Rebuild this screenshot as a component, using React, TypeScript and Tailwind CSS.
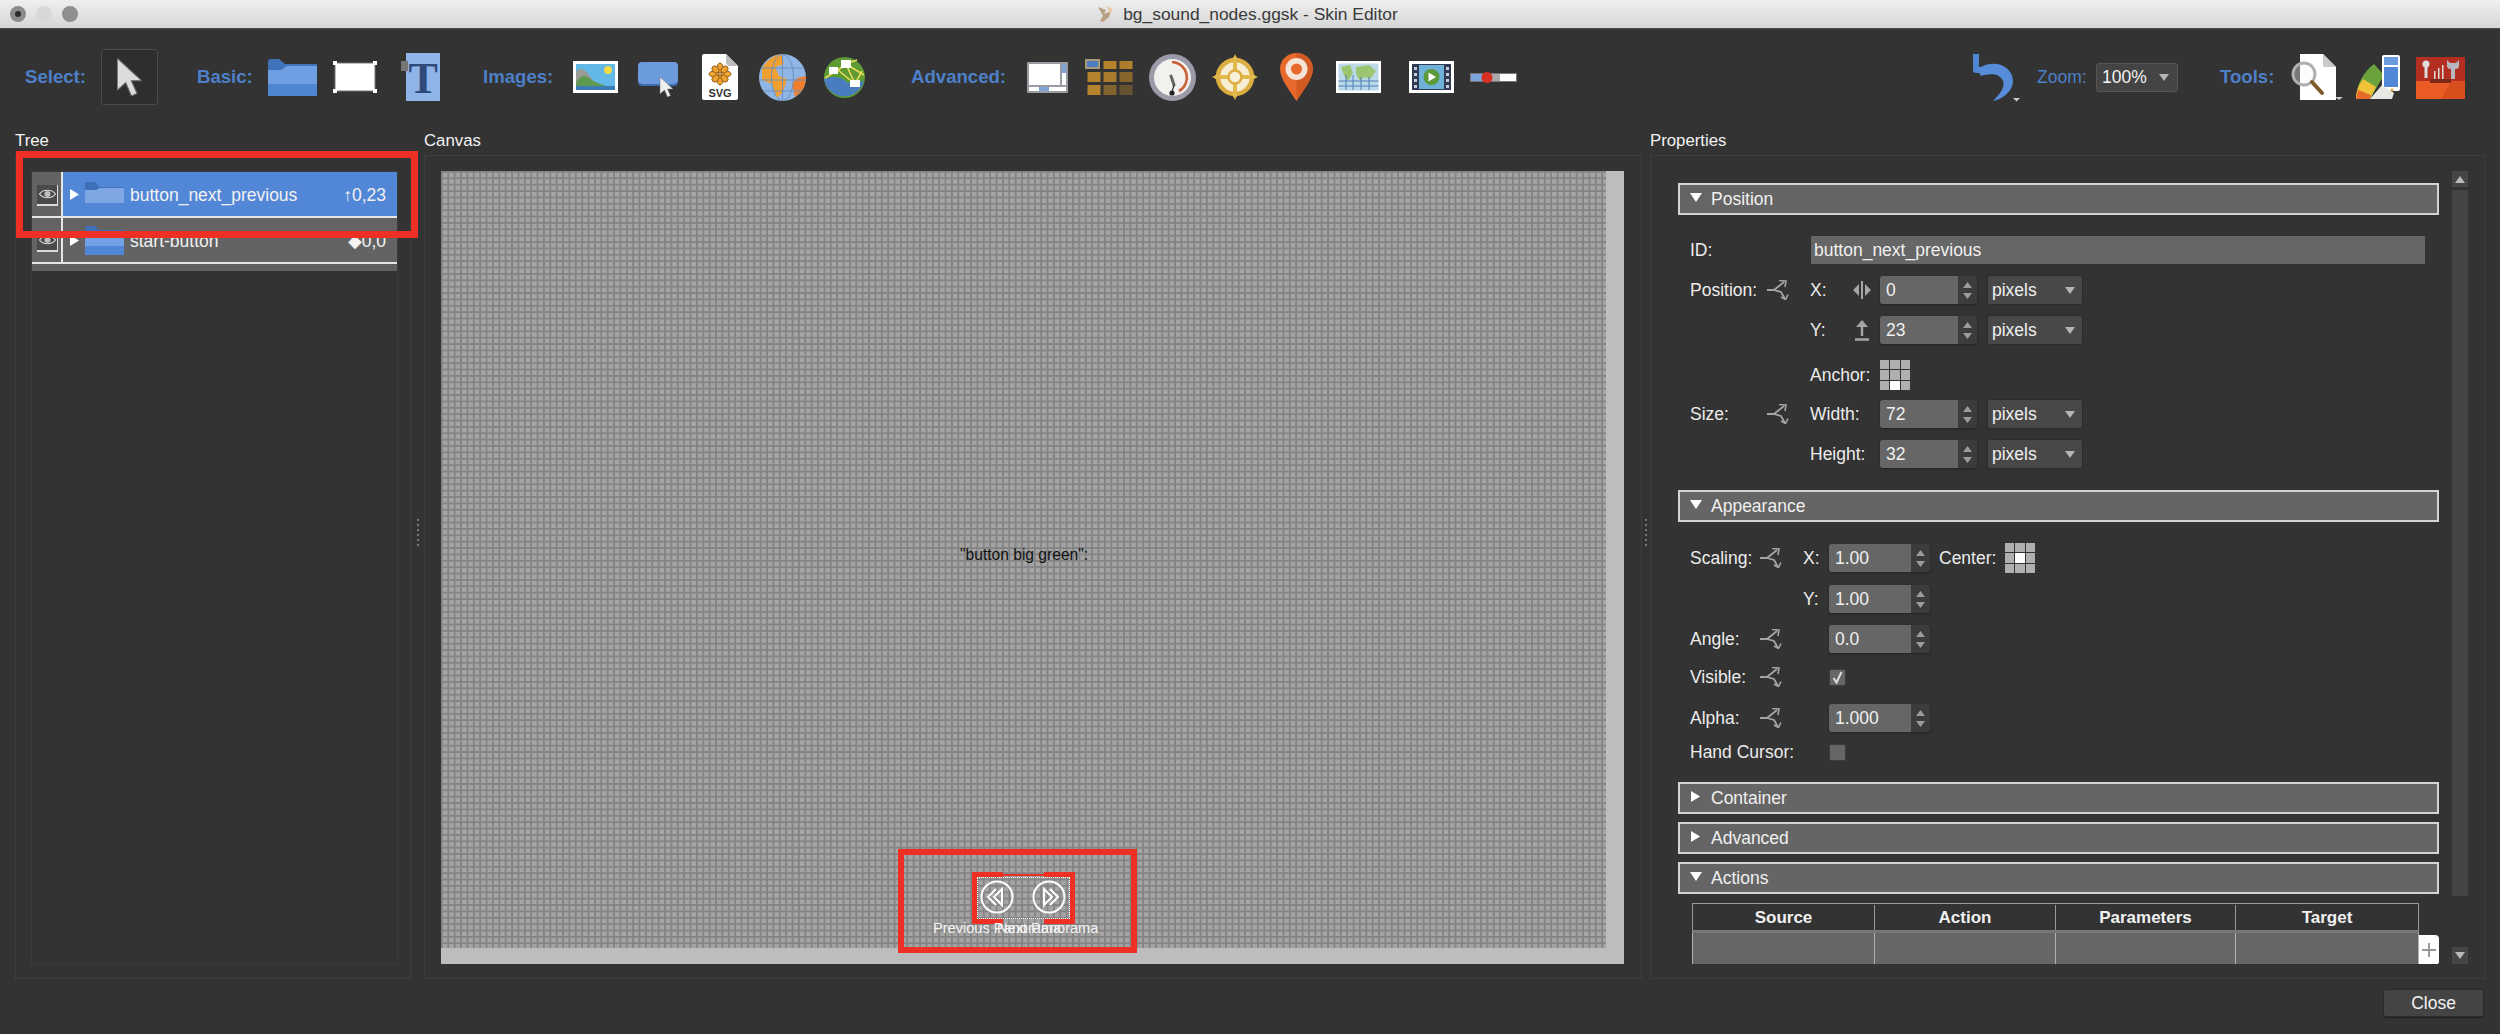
import type { ReactNode } from "react";

const Triangle = ({ dir, className = "" }: { dir: "up" | "down" | "right"; className?: string }) => {
  const d = dir === "up" ? "M0 8 L5 0 L10 8 Z" : dir === "down" ? "M0 0 L10 0 L5 8 Z" : "M0 0 L8 5 L0 10 Z";
  const w = dir === "right" ? 8 : 10;
  const h = dir === "right" ? 10 : 8;
  return (
    <svg viewBox={`0 0 ${w} ${h}`} preserveAspectRatio="none" className={`shrink-0 ${className}`}>
      <path d={d} fill="currentColor" />
    </svg>
  );
};

const CURSOR = "M0 0 L0 17 L4.5 13 L7.5 20 L10.5 18.7 L7.5 12 L13 12 Z";

const ToolLabel = ({ text, className }: { text: string; className: string }) => (
  <div className={`shrink-0 whitespace-nowrap text-[18.6px] leading-none font-bold text-[#4d80c8] ${className}`}>{text}</div>
);

const FolderIcon = () => (
  <svg width="49" height="37" viewBox="0 0 49 37" className="ml-[17px] shrink-0">
    <path d="M0 3 Q0 0 3 0 H11 L17 5 H49 V12 H0 Z" fill="#3f73bb" />
    <path d="M0 11 H13 L19 7 H49 V37 H0 Z" fill="#6f9fe2" />
    <rect y="25" width="49" height="12" fill="#4f86d2" />
  </svg>
);

const RectIcon = () => (
  <svg width="44" height="32" viewBox="0 0 44 32" className="ml-[16px] shrink-0">
    <rect x="2" y="2" width="40" height="28" fill="#fff" stroke="#777" />
    <rect width="4" height="4" fill="#fff" />
    <rect x="40" width="4" height="4" fill="#fff" />
    <rect y="28" width="4" height="4" fill="#fff" />
    <rect x="40" y="28" width="4" height="4" fill="#fff" />
  </svg>
);

const TextIcon = () => (
  <svg width="39" height="48" viewBox="0 0 39 48" className="ml-[24px] shrink-0">
    <rect x="5" width="34" height="48" fill="#8fb4e8" />
    <rect x="0" y="8" width="7" height="10" fill="#777" />
    <text x="7.5" y="40" fontSize="44" fontWeight="700" fontFamily="'Liberation Serif', serif" fill="#2f4a78">T</text>
  </svg>
);

const ImageIcon = () => (
  <svg width="45" height="32" viewBox="0 0 45 32" className="ml-[20px] shrink-0">
    <rect width="45" height="32" fill="#fff" />
    <rect x="3" y="3" width="39" height="26" fill="#62b8e6" />
    <circle cx="35" cy="9" r="4" fill="#f2dc45" />
    <path d="M3 10 C8 6 12 8 16 14 L24 25 H3 Z" fill="#9a9a98" />
    <path d="M3 22 C8 12 14 14 20 20 L33 25 H3 Z" fill="#5f9a52" />
    <rect x="3" y="25" width="39" height="4" fill="#3d7db5" />
  </svg>
);

const ButtonIcon = () => (
  <svg width="40" height="35" viewBox="0 0 40 35" className="mt-[5px] ml-[20px] shrink-0">
    <rect width="40" height="22" rx="4" fill="#6c9bdd" />
    <path d="M0 18 Q0 22 4 22 H36 Q40 22 40 18 V20 Q40 24 36 24 H4 Q0 24 0 20 Z" fill="#3f6db1" />
    <path d={CURSOR} transform="translate(22 15)" fill="#eee" stroke="#777" strokeWidth="0.5" />
  </svg>
);

const SvgIcon = () => (
  <svg width="36" height="46" viewBox="0 0 36 46" className="ml-[24px] shrink-0">
    <path d="M2 0 H24 L36 12 V44 Q36 46 34 46 H2 Q0 46 0 44 V2 Q0 0 2 0 Z" fill="#fff" />
    <path d="M24 0 L36 12 H28 Q24 12 24 8 Z" fill="#bdbdbd" />
    <g fill="#f0a32e" stroke="#7a4a10" strokeWidth="0.8">
      <ellipse cx="18" cy="14" rx="3" ry="5" />
      <ellipse cx="18" cy="26" rx="3" ry="5" />
      <ellipse cx="12" cy="20" rx="5" ry="3" />
      <ellipse cx="24" cy="20" rx="5" ry="3" />
      <ellipse cx="13.5" cy="15.5" rx="3" ry="4" transform="rotate(-45 13.5 15.5)" />
      <ellipse cx="22.5" cy="15.5" rx="3" ry="4" transform="rotate(45 22.5 15.5)" />
      <ellipse cx="13.5" cy="24.5" rx="3" ry="4" transform="rotate(45 13.5 24.5)" />
      <ellipse cx="22.5" cy="24.5" rx="3" ry="4" transform="rotate(-45 22.5 24.5)" />
    </g>
    <text x="18" y="43" textAnchor="middle" fontSize="11" fontWeight="700" fontFamily="'Liberation Sans', sans-serif" fill="#333">SVG</text>
  </svg>
);

const GlobeIcon = () => (
  <svg width="47" height="47" viewBox="0 0 47 47" className="ml-[21px] shrink-0">
    <circle cx="23.5" cy="23.5" r="23.5" fill="#8fb6e4" />
    <path d="M3 14 C10 4 18 0 23 1 L25 10 L16 13 L20 22 L28 25 L24 38 L18 44 L13 30 L3 26 Z" fill="#f2a030" />
    <path d="M47 22 A24 24 0 0 1 36 43 L33 30 L38 24 Z" fill="#f07f2e" />
    <g stroke="#6f90bc" strokeWidth="1" fill="none">
      <ellipse cx="23.5" cy="23.5" rx="11" ry="23" />
      <line x1="23.5" y1="0" x2="23.5" y2="47" />
      <line x1="2" y1="14" x2="45" y2="14" />
      <line x1="1" y1="26" x2="46" y2="26" />
      <line x1="5" y1="37" x2="42" y2="37" />
    </g>
  </svg>
);

const NetworkIcon = () => (
  <svg width="41" height="41" viewBox="0 0 41 41" className="ml-[18px] shrink-0">
    <circle cx="20.5" cy="20.5" r="20.5" fill="#5d9a33" />
    <path d="M0 22 C10 18 18 20 24 26 L40 24 A20.5 20.5 0 0 1 1 26 Z" fill="#4a7dc0" />
    <g stroke="#e8dc5a" strokeWidth="1.6" fill="none">
      <path d="M1 21 L14 13 L22 7 L33 3" />
      <path d="M22 7 L31 27 L38 14" />
      <path d="M14 13 L31 27" />
      <path d="M22 7 L40 18" />
    </g>
    <rect x="17" y="3" width="10" height="8" fill="#fff" />
    <rect x="5" y="10" width="9" height="7" fill="#fff" />
    <rect x="26" y="23" width="10" height="7" fill="#fff" />
  </svg>
);

const WindowIcon = () => (
  <svg width="41" height="31" viewBox="0 0 41 31" className="ml-[21px] shrink-0">
    <rect width="41" height="31" rx="1" fill="#9a9ca3" />
    <rect x="2" y="2" width="31" height="21" fill="#fff" />
    <rect x="35" y="2" width="4" height="21" fill="#fff" />
    <rect x="35" y="2" width="4" height="9" fill="#7fa4d8" />
    <rect x="2" y="25" width="37" height="4" fill="#fff" />
    <rect x="12" y="25" width="10" height="4" fill="#7fa4d8" />
  </svg>
);

const TILE_OPACITY = [0, 1, 0.95, 1, 0.9, 0.65, 1, 0.6, 0.4];

const GridIcon = () => (
  <svg width="48" height="36" viewBox="0 0 48 36" className="ml-[17px] shrink-0">
    {TILE_OPACITY.map((o, i) =>
      i === 0 ? (
        <g key={i}>
          <rect width="15" height="10" fill="#a89c7c" />
          <rect x="2" y="2" width="11" height="6" fill="#4d7cc0" />
        </g>
      ) : (
        <rect key={i} x={2.5 + (i % 3) * 16} y={Math.floor(i / 3) * 13 + (i < 3 ? 2 : 0)} width="13" height={i < 3 ? 8 : 10} fill="#b5832c" opacity={o} />
      )
    )}
  </svg>
);

const DialIcon = () => (
  <svg width="47" height="47" viewBox="0 0 47 47" className="ml-[16px] shrink-0">
    <circle cx="23.5" cy="23.5" r="23.5" fill="#9a9aa8" />
    <circle cx="23.5" cy="23.5" r="18.5" fill="#f3f1ee" />
    <path d="M23 8 A15.5 15.5 0 0 1 30 37" fill="none" stroke="#c8623a" strokeWidth="2.6" />
    <path d="M22 22 L25 31" stroke="#666" strokeWidth="3" strokeLinecap="round" />
    <path d="M25 31 L23 38" stroke="#333" strokeWidth="1.2" />
    <circle cx="23" cy="39" r="2.6" fill="#222" />
  </svg>
);

const CrosshairIcon = () => (
  <svg width="46" height="46" viewBox="0 0 46 46" className="ml-[16px] shrink-0">
    <circle cx="23" cy="23" r="17" fill="#f6edd2" stroke="#dcae40" strokeWidth="4.5" />
    <path d="M23 0 L26 6 H20 Z M23 46 L26 40 H20 Z M0 23 L6 20 V26 Z M46 23 L40 20 V26 Z" fill="#dcae40" />
    <path d="M23 3 V43 M3 23 H43" stroke="#e3b84c" strokeWidth="4" />
    <circle cx="23" cy="23" r="6.5" fill="#f7efd8" stroke="#dcae40" strokeWidth="2.5" />
  </svg>
);

const PinIcon = () => (
  <svg width="33" height="48" viewBox="0 0 33 48" className="ml-[22px] shrink-0">
    <path d="M16.5 0 C7 0 0 7 0 16 C0 26 10 38 16.5 48 C23 38 33 26 33 16 C33 7 26 0 16.5 0 Z" fill="#e8692c" />
    <path d="M16.5 0 C26 0 33 7 33 16 C33 26 23 38 16.5 48 Z" fill="#c9551f" opacity="0.7" />
    <circle cx="16.5" cy="16" r="11" fill="#f6e3d8" />
    <circle cx="16.5" cy="16" r="5.5" fill="#e8692c" />
  </svg>
);

const MapIcon = () => (
  <svg width="45" height="32" viewBox="0 0 45 32" className="ml-[23px] shrink-0">
    <rect width="45" height="32" fill="#fff" />
    <rect x="2.5" y="2.5" width="40" height="27" fill="#bcd9ea" />
    <path d="M5 6 L14 4 L17 12 L12 20 L8 14 Z M20 6 L33 4 L40 10 L34 18 L28 16 L24 20 L20 13 Z" fill="#9cc56f" />
    <path d="M2.5 20 H42.5 M2.5 25 H42.5 M10 14 V29 M17 14 V29 M25 16 V29 M33 16 V29" stroke="#4f7fb8" strokeWidth="1" />
  </svg>
);

const FilmIcon = () => (
  <svg width="45" height="32" viewBox="0 0 45 32" className="ml-[28px] shrink-0">
    <rect width="45" height="32" fill="#fff" />
    <rect x="3" y="3" width="39" height="26" fill="#2f3a55" />
    <rect x="10" y="4" width="25" height="24" fill="#6fb1d8" />
    <circle cx="22.5" cy="16" r="8" fill="#5d9a3a" />
    <path d="M19.5 11.5 L27 16 L19.5 20.5 Z" fill="#fff" />
    <g fill="#c8ccd8">
      <rect x="5" y="6" width="3" height="3" />
      <rect x="5" y="12" width="3" height="3" />
      <rect x="5" y="18" width="3" height="3" />
      <rect x="5" y="24" width="3" height="3" />
      <rect x="37" y="6" width="3" height="3" />
      <rect x="37" y="12" width="3" height="3" />
      <rect x="37" y="18" width="3" height="3" />
      <rect x="37" y="24" width="3" height="3" />
    </g>
  </svg>
);

const SliderIcon = () => (
  <svg width="47" height="11" viewBox="0 0 47 11" className="ml-[16px] shrink-0">
    <rect y="1" width="47" height="9" fill="#777" />
    <rect x="1" y="2" width="15" height="7" fill="#7ba4dc" />
    <rect x="16" y="2" width="14" height="7" fill="#aaa" />
    <rect x="30" y="2" width="16" height="7" fill="#fff" />
    <circle cx="17" cy="5.5" r="5.5" fill="#d92f22" />
  </svg>
);

const UndoIcon = () => (
  <svg width="47" height="49" viewBox="0 0 47 49" className="ml-[456px] shrink-0">
    <path d="M3 1 V17 H17" fill="none" stroke="#4f86d2" strokeWidth="6" strokeLinejoin="round" />
    <path d="M4 16 C22 4 40 14 40 28 C40 38 30 46 20 48 C28 40 32 34 30 28 C27 20 16 20 8 23 Z" fill="#568cd8" />
    <path d="M40 45 H47 L43.5 48.5 Z" fill="#ccc" />
  </svg>
);

const DocSearchIcon = () => (
  <svg width="52" height="46" viewBox="0 0 52 46" className="ml-[17px] shrink-0">
    <path d="M9 0 H32 L45 13 V46 H9 Z" fill="#fff" />
    <path d="M32 0 L45 13 H34 Q32 13 32 11 Z" fill="#c9c9c9" />
    <circle cx="13" cy="20" r="11" fill="#f6f6f6" fillOpacity="0.35" stroke="#b0b0b0" strokeWidth="3" />
    <path d="M21 28 L31 39" stroke="#7d5a2c" strokeWidth="4" strokeLinecap="round" />
    <path d="M44 43 H52 L48 46 Z" fill="#ccc" />
  </svg>
);

const SwatchIcon = () => (
  <svg width="44" height="44" viewBox="0 0 44 44" className="ml-[13px] shrink-0">
    <path d="M18 9 L28 20 L14 44 H0 C0 30 8 16 18 9 Z" fill="#6ba23c" />
    <path d="M7 24 L20 32 L14 44 H0 C0 36 3 30 7 24 Z" fill="#f0c33a" />
    <path d="M2 35 L15 40 L14 44 H0 Z" fill="#e8692c" />
    <rect x="26" width="18" height="36" rx="2" fill="#fff" />
    <rect x="28" y="2" width="14" height="8" fill="#6c9bdd" />
    <rect x="28" y="12" width="14" height="20" fill="#5286d6" />
    <path d="M14 44 L26 30 L38 38 L36 44 Z" fill="#e8e8e4" />
    <circle cx="36" cy="35" r="1.6" fill="#d9a93a" />
  </svg>
);

const ToolboxIcon = () => (
  <svg width="49" height="43" viewBox="0 0 49 43" className="ml-[16px] shrink-0">
    <rect y="1" width="49" height="24" fill="#b22f22" />
    <rect x="0" y="25" width="49" height="18" fill="#ea5c24" />
    <path d="M25 43 L35 25 H49 V43 Z" fill="#d84f1d" />
    <rect x="14" y="23" width="21" height="4" fill="#7c2a17" />
    <circle cx="10" cy="8" r="3.5" fill="#ddd" />
    <rect x="8.5" y="8" width="3" height="14" fill="#ddd" />
    <rect x="18" y="15" width="1.5" height="8" fill="#ddd" />
    <rect x="22" y="12" width="1.5" height="11" fill="#ddd" />
    <rect x="26" y="9" width="1.5" height="14" fill="#ddd" />
    <path d="M31 4 L31 10 Q31 13 35 13 L35 23 H39 V13 Q43 13 43 10 L43 4 L40 7 H34 Z" fill="#b8b8c0" />
  </svg>
);

const Eye = () => (
  <div className="flex h-[21px] w-[21px] items-center justify-center border-r border-b-2 border-[#dcdcdc] bg-[#4a4a4a]">
    <svg width="17" height="12" viewBox="0 0 17 12">
      <path d="M0.5 6 C4 1 13 1 16.5 6 C13 11 4 11 0.5 6 Z" fill="none" stroke="#d8d8d8" strokeWidth="1.2" />
      <circle cx="8.5" cy="6" r="3" fill="#bdbdbd" />
    </svg>
  </div>
);

const TreeRow = ({ name, value, selected }: { name: string; value: string; selected?: boolean }) => (
  <div className="flex h-[46px] border-b-2 border-[#e6e6e6] bg-[#636363]">
    <div className="flex w-[31px] shrink-0 items-center justify-center border-r-2 border-[#e6e6e6] pt-[2px] pl-[2px]">
      <Eye />
    </div>
    <div className={`flex flex-1 items-center pr-[11px] text-[17.5px] text-[#f2f2f2] ${selected ? "bg-[#5286d6]" : ""}`}>
      <Triangle dir="right" className="ml-[7px] h-[11px] w-[9px] text-white" />
      {selected ? (
        <svg width="39" height="21" viewBox="0 0 39 21" className="mb-[4px] ml-[6px] shrink-0">
          <path d="M0 2 Q0 0 2 0 H10 L14 5 H39 V8 H0 Z" fill="#3f6fb8" />
          <path d="M0 8 H11 L15 6 H39 V21 H0 Z" fill="#7ea7e4" />
        </svg>
      ) : (
        <svg width="39" height="29" viewBox="0 0 39 29" className="ml-[6px] shrink-0">
          <path d="M0 2 Q0 0 2 0 H10 L14 4 H39 V10 H0 Z" fill="#3f6fb8" />
          <rect y="10" width="39" height="19" fill="#72a0e4" />
          <rect y="20" width="39" height="9" fill="#5286d6" />
        </svg>
      )}
      <span className="mt-[2px] ml-[6px]">{name}</span>
      <span className="mt-[2px] ml-auto">{value}</span>
    </div>
  </div>
);

const ArrowStep = () => (
  <div className="flex h-full w-[19px] shrink-0 flex-col items-center justify-center gap-[5px] text-[#9c9c9c]">
    <Triangle dir="up" className="h-[6px] w-[9px]" />
    <Triangle dir="down" className="h-[6px] w-[9px]" />
  </div>
);

const Spinner = ({ value, className }: { value: string; className: string }) => (
  <div className="flex h-[28px] shrink-0 rounded-[3px] bg-[#3c3c3c] shadow-[0_1px_2px_#222]">
    <div className={`flex h-full items-center rounded-l-[3px] bg-[#666666] pl-[6px] text-[17.5px] text-[#f0f0f0] ${className}`}>{value}</div>
    <ArrowStep />
  </div>
);

const UnitSelect = () => (
  <div className="ml-[10px] flex h-[30px] w-[96px] shrink-0 items-center justify-between rounded-[3px] border border-[#2b2b2b] bg-[#484848] pr-[7px] pl-[4px] text-[17.5px] text-[#f0f0f0]">
    pixels
    <Triangle dir="down" className="h-[7px] w-[10px] text-[#b5b5b5]" />
  </div>
);

const LinkIcon = () => (
  <svg width="22" height="20" viewBox="0 0 22 20" className="shrink-0 text-[#a5a5a5]">
    <path d="M0 10 H7 L17 2 M7 10 L14 12 L18 19" fill="none" stroke="currentColor" strokeWidth="1.8" />
    <path d="M12 0.5 L19 1 L18 7 M14 17 L18.5 19.5 L21 14.5" fill="none" stroke="currentColor" strokeWidth="1.6" />
  </svg>
);

const MatrixIcon = ({ active }: { active: number }) => (
  <div className="grid h-[30px] w-[30px] shrink-0 grid-cols-3 gap-[1px]">
    {[0, 1, 2, 3, 4, 5, 6, 7, 8].map((i) => (
      <div key={i} className={i === active ? "bg-white" : "bg-[#b0b0b0]"} />
    ))}
  </div>
);

const SectionHeader = ({ title, open, className = "" }: { title: string; open?: boolean; className?: string }) => (
  <div className={`flex h-[32px] shrink-0 items-center border-2 border-[#d4d4d4] bg-[#656565] text-[17.5px] text-[#f0f0f0] ${className}`}>
    <div className="flex w-[31px] shrink-0 justify-center pb-[3px]">
      {open ? <Triangle dir="down" className="h-[9px] w-[12px] text-white" /> : <Triangle dir="right" className="h-[11px] w-[9px] text-white" />}
    </div>
    <span className="mt-[1px]">{title}</span>
  </div>
);

const Row = ({ children, className }: { children: ReactNode; className: string }) => (
  <div className={`flex h-[28px] shrink-0 items-center pl-[12px] text-[17.5px] text-[#ececec] ${className}`}>{children}</div>
);

const Label = ({ text, className }: { text: string; className: string }) => (
  <div className={`shrink-0 whitespace-nowrap ${className}`}>{text}</div>
);

const CheckBox = ({ checked }: { checked?: boolean }) => (
  <div className="flex h-[17px] w-[17px] shrink-0 items-center justify-center rounded-[2px] border border-[#3d3d3d] bg-[#666666]">
    {checked && (
      <svg width="11" height="13" viewBox="0 0 11 13">
        <path d="M1.5 7 L4.5 11.5 L9.5 1" fill="none" stroke="#dddddd" strokeWidth="2" />
      </svg>
    )}
  </div>
);

const Circle = ({ flip }: { flip?: boolean }) => (
  <svg width="34" height="34" viewBox="0 0 34 34" className="absolute top-0">
    <circle cx="17" cy="17" r="15.5" fill="none" stroke="#fff" strokeWidth="2" />
    <path
      d={flip ? "M12 9 L20 17 L12 25 V9 Z M18 9 L26 17 L18 25" : "M22 9 L14 17 L22 25 V9 Z M16 9 L8 17 L16 25"}
      fill="none"
      stroke="#fff"
      strokeWidth="2"
    />
  </svg>
);

const Splitter = () => (
  <div className="flex flex-col gap-[3px] pb-[40px]">
    {[0, 1, 2, 3, 4, 5].map((i) => (
      <div key={i} className="h-[2px] w-[2px] bg-[#777777]" />
    ))}
  </div>
);

const App = () => (
  <div className="flex h-[1034px] w-[2500px] flex-col overflow-hidden bg-[#333333] font-['Liberation_Sans',sans-serif]">
    {/* title bar */}
    <div className="relative flex h-[29px] shrink-0 items-center justify-center border-b border-[#4a4a4a] bg-gradient-to-b from-[#efefef] to-[#d6d6d6] pr-[5px] text-[17.4px] text-[#3a3a3a]">
      <div className="absolute top-[6px] left-[10px] flex gap-[10px]">
        <div className="flex h-[16px] w-[16px] items-center justify-center rounded-full bg-[#8c8c8c]">
          <div className="h-[6px] w-[6px] rounded-full bg-[#2c2c2c]" />
        </div>
        <div className="h-[16px] w-[16px] rounded-full bg-[#d8d8d8]" />
        <div className="h-[16px] w-[16px] rounded-full bg-[#8f8f8f]" />
      </div>
      <svg width="18" height="18" viewBox="0 0 18 18" className="mr-[8px] shrink-0">
        <path d="M1 2 L9 5 L7 9 L14 6 L12 12 L6 17 L3 16 L6 11 Z" fill="#b9a184" />
        <path d="M10 1 L16 4 L13 9 Z" fill="#e9c9a8" />
      </svg>
      bg_sound_nodes.ggsk - Skin Editor
    </div>

    {/* toolbar */}
    <div className="flex h-[96px] shrink-0 items-center pl-[25px]">
      <ToolLabel text="Select:" className="w-[62px]" />
      <div className="ml-[14px] flex h-[56px] w-[57px] shrink-0 items-center justify-center rounded-[3px] border border-[#4c4c4c] bg-[#2e2e2e]">
        <svg width="25" height="38" viewBox="0 0 13 20">
          <path d={CURSOR} fill="#dcdcdc" stroke="#666666" strokeWidth="0.6" />
        </svg>
      </div>
      <ToolLabel text="Basic:" className="ml-[39px] w-[54px]" />
      <FolderIcon />
      <RectIcon />
      <TextIcon />
      <ToolLabel text="Images:" className="ml-[43px] w-[70px]" />
      <ImageIcon />
      <ButtonIcon />
      <SvgIcon />
      <GlobeIcon />
      <NetworkIcon />
      <ToolLabel text="Advanced:" className="ml-[46px] w-[95px]" />
      <WindowIcon />
      <GridIcon />
      <DialIcon />
      <CrosshairIcon />
      <PinIcon />
      <MapIcon />
      <FilmIcon />
      <SliderIcon />
      <UndoIcon />
      <div className="ml-[17px] w-[50px] shrink-0 text-[17.5px] text-[#4d80c8]">Zoom:</div>
      <div className="ml-[9px] flex h-[29px] w-[82px] shrink-0 items-center justify-between rounded-[3px] border border-[#555555] bg-[#444444] pr-[8px] pl-[5px] text-[17.5px] text-[#f2f2f2]">
        100%
        <Triangle dir="down" className="h-[7px] w-[10px] text-[#b5b5b5]" />
      </div>
      <ToolLabel text="Tools:" className="ml-[42px] w-[54px]" />
      <DocSearchIcon />
      <SwatchIcon />
      <ToolboxIcon />
    </div>

    {/* panels */}
    <div className="flex h-[854px] shrink-0 pl-[15px]">
      {/* tree */}
      <div className="flex w-[396px] shrink-0 flex-col">
        <div className="flex h-[30px] shrink-0 items-center pt-[2px] text-[16.8px] text-[#f2f2f2]">Tree</div>
        <div className="relative flex-1 border border-[#3e3e3e] pt-[15px] pl-[15px]">
          <div className="flex h-[794px] w-[367px] flex-col border border-[#3b3b3b]">
            <TreeRow name="button_next_previous" value="↑0,23" selected />
            <TreeRow name="start-button" value="◆0,0" />
            <div className="h-[7px] bg-[#606060]" />
          </div>
          <div className="absolute top-[-5px] left-[0px] h-[87px] w-[402px] border-[7px] border-[#ee2f23]" />
        </div>
      </div>

      <div className="flex w-[13px] shrink-0 items-center justify-center">
        <Splitter />
      </div>

      {/* canvas */}
      <div className="flex w-[1218px] shrink-0 flex-col">
        <div className="flex h-[30px] shrink-0 items-center pt-[2px] text-[16.8px] text-[#f2f2f2]">Canvas</div>
        <div className="flex-1 border border-[#3e3e3e] pt-[15px] pl-[16px]">
          <div className="flex h-[793px] w-[1183px] flex-col bg-[#bdbdbd]">
            <div className="flex flex-1">
              <div className="relative flex-1 bg-[#a4a4a4] bg-[linear-gradient(#848484_1.6px,transparent_1.6px),linear-gradient(90deg,#848484_1.6px,transparent_1.6px)] bg-[size:6.376px_6.376px]">
                <div className="absolute top-[372px] left-[519px] text-[15.6px] whitespace-nowrap text-[#111111]">"button big green":</div>
                <div className="absolute top-[678px] left-[457px] h-[104px] w-[239px] border-[6px] border-[#ee2f23]" />
                <div className="absolute top-[701px] left-[531px] h-[52px] w-[103px] border-x-[5px] border-[#ee2f23]" />
                <div className="absolute top-[701px] left-[531px] h-[5px] w-[31px] bg-[#ee2f23]" />
                <div className="absolute top-[701px] left-[603px] h-[5px] w-[31px] bg-[#ee2f23]" />
                <div className="absolute top-[748px] left-[531px] h-[5px] w-[31px] bg-[#ee2f23]" />
                <div className="absolute top-[748px] left-[603px] h-[5px] w-[31px] bg-[#ee2f23]" />
                <div className="absolute top-[703px] left-[562px] h-[2px] w-[41px] bg-[#ee2f23]" />
                <div className="absolute top-[706px] left-[536px] h-[42px] w-[93px] border border-dotted border-white" />
                <div className="absolute top-[709px] left-[539px]">
                  <Circle />
                </div>
                <div className="absolute top-[709px] left-[591px]">
                  <Circle flip />
                </div>
                <div className="absolute top-[747px] left-[492px] text-[14.6px] whitespace-nowrap text-[#f4f4f4]">Previous Panorama</div>
                <div className="absolute top-[747px] left-[556px] text-[14.6px] whitespace-nowrap text-[#f4f4f4]">Next Panorama</div>
              </div>
              <div className="w-[18px] shrink-0" />
            </div>
            <div className="h-[16px] shrink-0" />
          </div>
        </div>
      </div>

      <div className="flex w-[8px] shrink-0 items-center justify-center">
        <Splitter />
      </div>

      {/* properties */}
      <div className="flex w-[835px] shrink-0 flex-col">
        <div className="flex h-[30px] shrink-0 items-center pt-[2px] text-[16.8px] text-[#f2f2f2]">Properties</div>
        <div className="flex flex-1 border border-[#3e3e3e] pt-[15px] pl-[27px]">
          <div className="flex h-[793px] w-[761px] shrink-0 flex-col overflow-hidden pt-[12px]">
            <SectionHeader title="Position" open />
            <Row className="mt-[21px]">
              <Label text="ID:" className="w-[121px]" />
              <div className="flex h-[28px] w-[614px] items-center bg-[#666666] pl-[3px] text-[#f0f0f0]">button_next_previous</div>
            </Row>
            <Row className="mt-[12px]">
              <Label text="Position:" className="w-[77px]" />
              <LinkIcon />
              <Label text="X:" className="ml-[21px] w-[41px]" />
              <svg width="22" height="18" viewBox="0 0 22 18" className="mr-[7px] shrink-0 text-[#a5a5a5]">
                <path d="M11 0 V18" stroke="currentColor" strokeWidth="2" />
                <path d="M8 3 L2 9 L8 15 Z M14 3 L20 9 L14 15 Z" fill="currentColor" />
              </svg>
              <Spinner value="0" className="w-[78px]" />
              <UnitSelect />
            </Row>
            <Row className="mt-[12px]">
              <div className="w-[120px] shrink-0" />
              <Label text="Y:" className="w-[41px]" />
              <svg width="22" height="22" viewBox="0 0 22 22" className="mr-[7px] shrink-0 text-[#a5a5a5]">
                <path d="M11 2 V17 M4 20.5 H18" stroke="currentColor" strokeWidth="2.4" />
                <path d="M5 8 L11 1 L17 8 Z" fill="currentColor" />
              </svg>
              <Spinner value="23" className="w-[78px]" />
              <UnitSelect />
            </Row>
            <Row className="mt-[16px] h-[30px]">
              <div className="w-[120px] shrink-0" />
              <Label text="Anchor:" className="w-[70px]" />
              <MatrixIcon active={7} />
            </Row>
            <Row className="mt-[10px]">
              <Label text="Size:" className="w-[77px]" />
              <LinkIcon />
              <Label text="Width:" className="ml-[21px] w-[70px]" />
              <Spinner value="72" className="w-[78px]" />
              <UnitSelect />
            </Row>
            <Row className="mt-[12px]">
              <div className="w-[120px] shrink-0" />
              <Label text="Height:" className="w-[70px]" />
              <Spinner value="32" className="w-[78px]" />
              <UnitSelect />
            </Row>

            <SectionHeader title="Appearance" open className="mt-[22px]" />
            <Row className="mt-[22px]">
              <Label text="Scaling:" className="w-[70px]" />
              <LinkIcon />
              <Label text="X:" className="ml-[21px] w-[26px]" />
              <Spinner value="1.00" className="w-[82px]" />
              <Label text="Center:" className="ml-[9px] w-[66px]" />
              <MatrixIcon active={4} />
            </Row>
            <Row className="mt-[13px]">
              <div className="w-[113px] shrink-0" />
              <Label text="Y:" className="w-[26px]" />
              <Spinner value="1.00" className="w-[82px]" />
            </Row>
            <Row className="mt-[12px]">
              <Label text="Angle:" className="w-[70px]" />
              <LinkIcon />
              <div className="ml-[47px]" />
              <Spinner value="0.0" className="w-[82px]" />
            </Row>
            <Row className="mt-[10px]">
              <Label text="Visible:" className="w-[70px]" />
              <LinkIcon />
              <div className="ml-[47px]" />
              <CheckBox checked />
            </Row>
            <Row className="mt-[13px]">
              <Label text="Alpha:" className="w-[70px]" />
              <LinkIcon />
              <div className="ml-[47px]" />
              <Spinner value="1.000" className="w-[82px]" />
            </Row>
            <Row className="mt-[6px]">
              <Label text="Hand Cursor:" className="w-[139px]" />
              <CheckBox />
            </Row>

            <SectionHeader title="Container" className="mt-[16px]" />
            <SectionHeader title="Advanced" className="mt-[8px]" />
            <SectionHeader title="Actions" open className="mt-[8px]" />

            <div className="mt-[9px] ml-[14px] flex">
              <div className="w-[727px] shrink-0">
                <div className="flex h-[30px] border border-b-[3px] border-[#9a9a9a] border-b-[#787878] pt-[1px] text-[17px] font-bold text-[#f0f0f0]">
                  <div className="flex w-[182px] items-center justify-center border-r border-[#9a9a9a]">Source</div>
                  <div className="flex w-[181px] items-center justify-center border-r border-[#9a9a9a]">Action</div>
                  <div className="flex w-[180px] items-center justify-center border-r border-[#9a9a9a]">Parameters</div>
                  <div className="flex flex-1 items-center justify-center">Target</div>
                </div>
                <div className="flex h-[32px] border border-t-0 border-[#b0b0b0] bg-[#666666]">
                  <div className="w-[182px] border-r border-[#b0b0b0]" />
                  <div className="w-[181px] border-r border-[#b0b0b0]" />
                  <div className="w-[180px] border-r border-[#b0b0b0]" />
                </div>
              </div>
              <div className="mt-[32px] flex h-[30px] w-[20px] shrink-0 items-center justify-center rounded-r-[4px] bg-white text-[#999999]">
                <svg width="14" height="14" viewBox="0 0 14 14">
                  <path d="M7 0 V14 M0 7 H14" stroke="currentColor" strokeWidth="2" />
                </svg>
              </div>
            </div>
          </div>

          {/* scrollbar */}
          <div className="ml-[13px] flex h-[793px] w-[16px] shrink-0 flex-col">
            <div className="flex h-[16px] items-center justify-center bg-[#454545] text-[#b8b8b8]">
              <Triangle dir="up" className="h-[7px] w-[10px]" />
            </div>
            <div className="mt-[3px] h-[706px] bg-[#454545]" />
            <div className="mt-auto flex h-[17px] items-center justify-center bg-[#454545] text-[#b8b8b8]">
              <Triangle dir="down" className="h-[7px] w-[10px]" />
            </div>
          </div>
        </div>
      </div>
    </div>

    {/* footer */}
    <div className="flex flex-1 justify-end pt-[10px] pr-[16px]">
      <div className="flex h-[28px] w-[101px] items-center justify-center rounded-[3px] border border-[#2b2b2b] bg-[#444444] text-[17.5px] text-[#f2f2f2] shadow-[0_1px_1px_#222]">
        Close
      </div>
    </div>
  </div>
);

export default App;
